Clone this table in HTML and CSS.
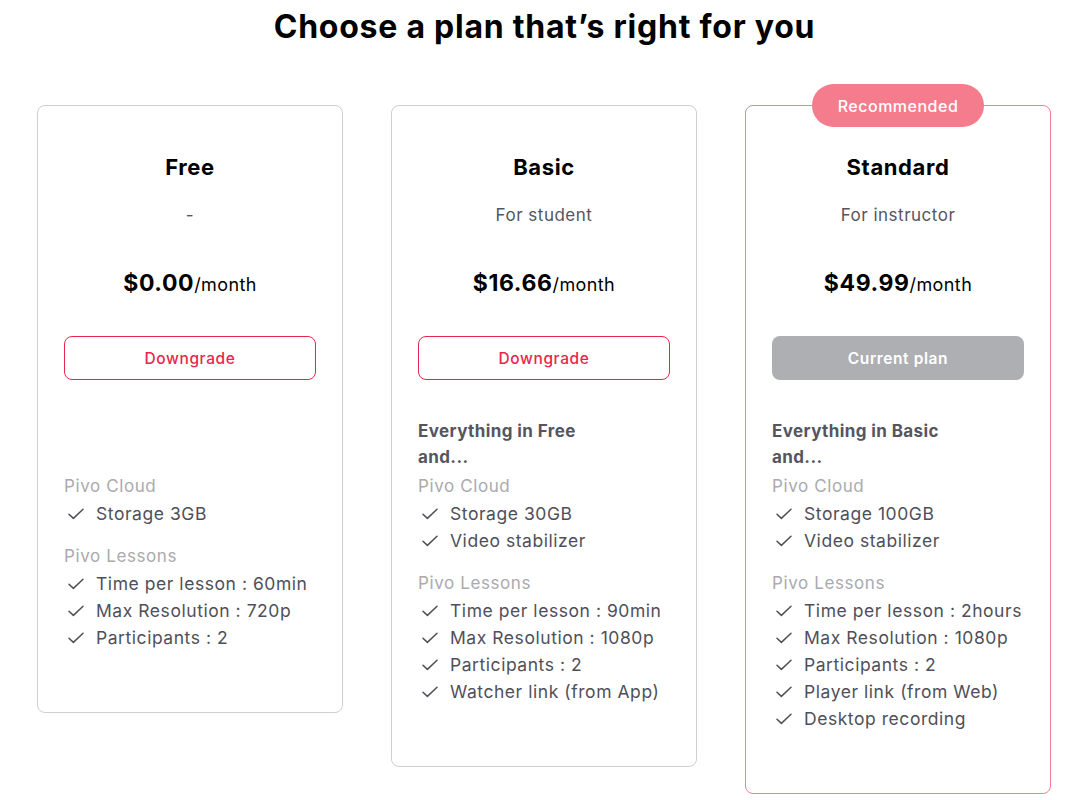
FILE: index.html
```html
<!DOCTYPE html>
<html lang="en">
<head>
<meta charset="utf-8">
<title>Plans</title>
<link rel="stylesheet" href="styles.css">
</head>
<body>
<h1 class="page-title">Choose a plan that’s right for you</h1>
<div class="plans">
  <section class="card">
    <h2 class="plan-name">Free</h2>
    <p class="plan-sub">-</p>
    <p class="price"><strong>$0.00</strong>/month</p>
    <button class="btn btn-outline">Downgrade</button>
    <div class="features">
      <p class="intro intro-empty"></p>
      <p class="group">Pivo Cloud</p>
      <ul>
        <li><svg class="chk" viewBox="0 0 16 12"><path d="M1 6.2 5.4 10.4 15 1.2"/></svg>Storage 3GB</li>
      </ul>
      <p class="group group-gap">Pivo Lessons</p>
      <ul>
        <li><svg class="chk" viewBox="0 0 16 12"><path d="M1 6.2 5.4 10.4 15 1.2"/></svg>Time per lesson : 60min</li>
        <li><svg class="chk" viewBox="0 0 16 12"><path d="M1 6.2 5.4 10.4 15 1.2"/></svg>Max Resolution : 720p</li>
        <li><svg class="chk" viewBox="0 0 16 12"><path d="M1 6.2 5.4 10.4 15 1.2"/></svg>Participants : 2</li>
      </ul>
    </div>
  </section>
  <section class="card">
    <h2 class="plan-name">Basic</h2>
    <p class="plan-sub">For student</p>
    <p class="price"><strong>$16.66</strong>/month</p>
    <button class="btn btn-outline">Downgrade</button>
    <div class="features">
      <p class="intro">Everything in Free<br>and...</p>
      <p class="group">Pivo Cloud</p>
      <ul>
        <li><svg class="chk" viewBox="0 0 16 12"><path d="M1 6.2 5.4 10.4 15 1.2"/></svg>Storage 30GB</li>
        <li><svg class="chk" viewBox="0 0 16 12"><path d="M1 6.2 5.4 10.4 15 1.2"/></svg>Video stabilizer</li>
      </ul>
      <p class="group group-gap">Pivo Lessons</p>
      <ul>
        <li><svg class="chk" viewBox="0 0 16 12"><path d="M1 6.2 5.4 10.4 15 1.2"/></svg>Time per lesson : 90min</li>
        <li><svg class="chk" viewBox="0 0 16 12"><path d="M1 6.2 5.4 10.4 15 1.2"/></svg>Max Resolution : 1080p</li>
        <li><svg class="chk" viewBox="0 0 16 12"><path d="M1 6.2 5.4 10.4 15 1.2"/></svg>Participants : 2</li>
        <li><svg class="chk" viewBox="0 0 16 12"><path d="M1 6.2 5.4 10.4 15 1.2"/></svg>Watcher link (from App)</li>
      </ul>
    </div>
  </section>
  <section class="card card-featured">
    <span class="badge">Recommended</span>
    <h2 class="plan-name">Standard</h2>
    <p class="plan-sub">For instructor</p>
    <p class="price"><strong>$49.99</strong>/month</p>
    <button class="btn btn-current">Current plan</button>
    <div class="features">
      <p class="intro">Everything in Basic<br>and...</p>
      <p class="group">Pivo Cloud</p>
      <ul>
        <li><svg class="chk" viewBox="0 0 16 12"><path d="M1 6.2 5.4 10.4 15 1.2"/></svg>Storage 100GB</li>
        <li><svg class="chk" viewBox="0 0 16 12"><path d="M1 6.2 5.4 10.4 15 1.2"/></svg>Video stabilizer</li>
      </ul>
      <p class="group group-gap">Pivo Lessons</p>
      <ul>
        <li><svg class="chk" viewBox="0 0 16 12"><path d="M1 6.2 5.4 10.4 15 1.2"/></svg>Time per lesson : 2hours</li>
        <li><svg class="chk" viewBox="0 0 16 12"><path d="M1 6.2 5.4 10.4 15 1.2"/></svg>Max Resolution : 1080p</li>
        <li><svg class="chk" viewBox="0 0 16 12"><path d="M1 6.2 5.4 10.4 15 1.2"/></svg>Participants : 2</li>
        <li><svg class="chk" viewBox="0 0 16 12"><path d="M1 6.2 5.4 10.4 15 1.2"/></svg>Player link (from Web)</li>
        <li><svg class="chk" viewBox="0 0 16 12"><path d="M1 6.2 5.4 10.4 15 1.2"/></svg>Desktop recording</li>
      </ul>
    </div>
  </section>
</div>
</body>
</html>
```
FILE: styles.css
```css
* { box-sizing: border-box; }
body {
  margin: 0;
  background: #fff;
  font-family: Inter, "Noto Sans", sans-serif;
  color: #4f4f5a;
}
.page-title {
  margin: 7px 0 0;
  text-align: center;
  font-size: 32px;
  line-height: 40px;
  font-weight: 700;
  color: #000;
  letter-spacing: 0.75px;
}
.plans {
  display: flex;
  justify-content: flex-start;
  align-items: flex-start;
  gap: 48px;
  margin-top: 58px;
  padding-left: 37px;
}
.card {
  position: relative;
  width: 306px;
  border: 1px solid #cfcfd2;
  border-radius: 8px;
  padding: 45px 26px 61px;
  display: flex;
  flex-direction: column;
}
.card-featured { border-color: #ef8193; }
.badge {
  position: absolute;
  top: -22px;
  left: 50%;
  transform: translateX(-50%);
  width: 172px;
  height: 43px;
  border-radius: 22px;
  background: #f47c8d;
  color: #fff;
  font-size: 16px;
  font-weight: 500;
  letter-spacing: 0.5px;
  display: flex;
  align-items: center;
  justify-content: center;
}
.plan-name {
  margin: 0;
  text-align: center;
  font-size: 22px;
  line-height: 32px;
  font-weight: 700;
  letter-spacing: 0.6px;
  color: #000;
}
.plan-sub {
  margin: 20px 0 0;
  text-align: center;
  font-size: 17px;
  line-height: 24px;
  letter-spacing: 0.5px;
  color: #55555f;
}
.price {
  margin: 40px 0 0;
  text-align: center;
  font-size: 18px;
  line-height: 32px;
  letter-spacing: 0.4px;
  color: #000;
}
.price strong { font-size: 23px; font-weight: 700; letter-spacing: 0.6px; }
.btn {
  margin-top: 35px;
  height: 44px;
  width: 100%;
  border-radius: 8px;
  font-family: inherit;
  font-size: 15.5px;
  font-weight: 500;
  letter-spacing: 0.6px;
  cursor: pointer;
}
.btn-outline {
  background: #fff;
  border: 1px solid #e8264b;
  color: #e8264b;
}
.btn-current {
  background: #aeafb3;
  border: 0;
  color: #fff;
  font-weight: 600;
}
.features { margin-top: 38px; }
.intro {
  margin: 0 0 3px;
  font-size: 17px;
  line-height: 26px;
  font-weight: 700;
  letter-spacing: 0.4px;
  color: #55555f;
  height: 52px;
}
.group {
  margin: 0;
  font-size: 17px;
  line-height: 27px;
  letter-spacing: 0.6px;
  color: #aaaab0;
}
.group-gap { margin-top: 16px; }
ul { list-style: none; margin: 0; padding: 0; }
li {
  display: flex;
  align-items: center;
  padding-left: 4px;
  gap: 12px;
  font-size: 17.5px;
  line-height: 27px;
  letter-spacing: 0.55px;
  color: #4f4f5a;
}
.chk {
  width: 16px;
  height: 12px;
  flex: none;
  fill: none;
  stroke: #4f4f5a;
  stroke-width: 1.5;
  stroke-linecap: round;
  stroke-linejoin: round;
}
```
